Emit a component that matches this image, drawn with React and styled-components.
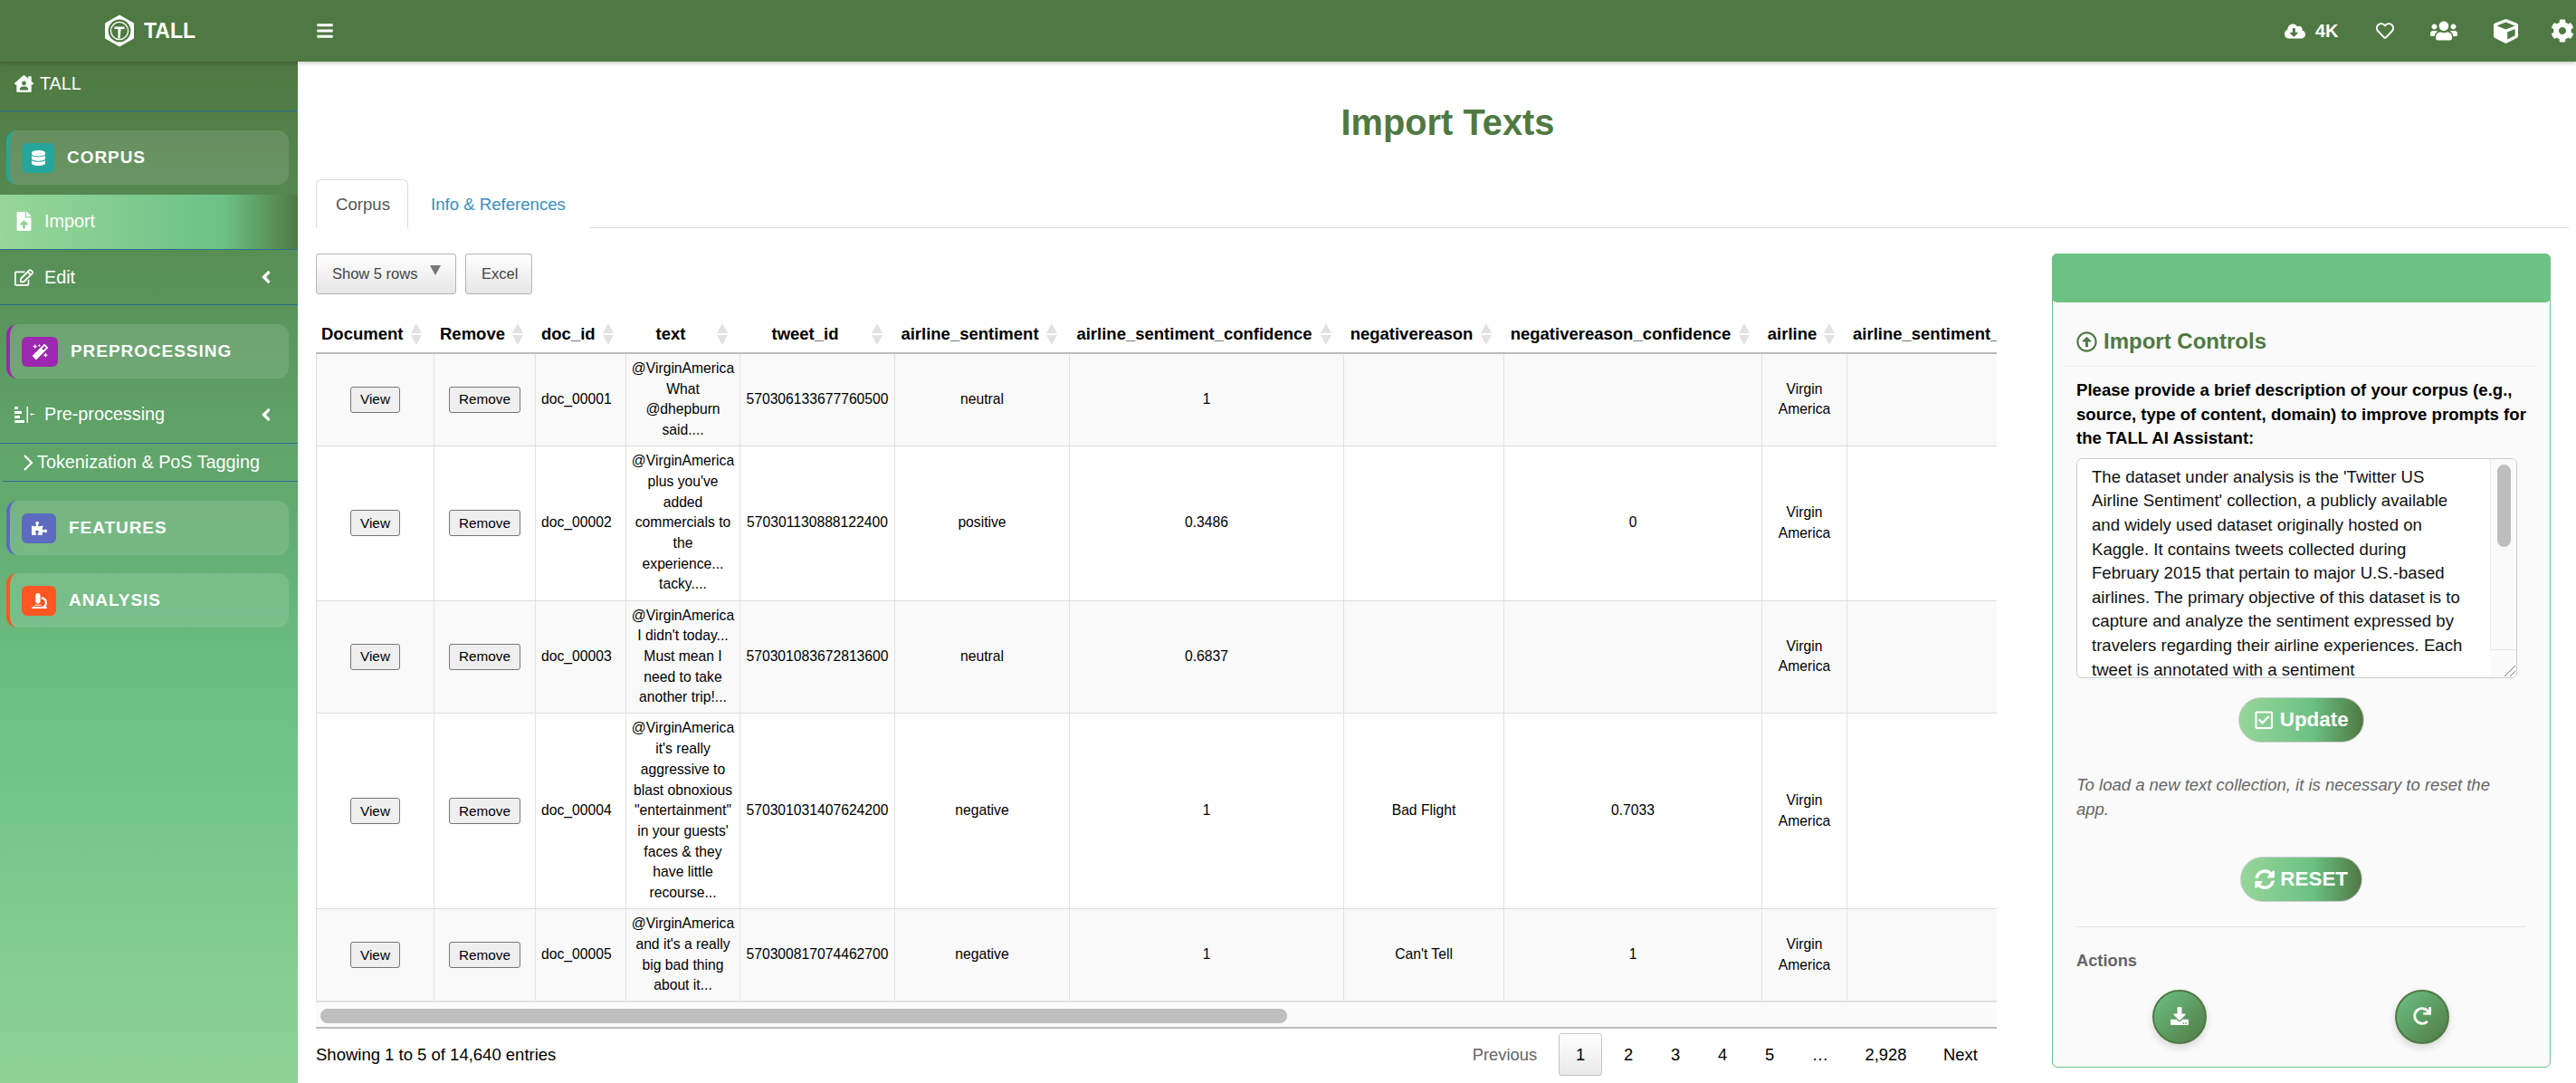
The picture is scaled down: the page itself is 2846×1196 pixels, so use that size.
import React from 'react';
import styled, { createGlobalStyle } from 'styled-components';
import {
  FaCloudDownloadAlt, FaRegHeart, FaUsers, FaCube, FaCog, FaHouseUser, FaDatabase,
  FaFileUpload, FaRegEdit, FaAngleLeft, FaMagic, FaPuzzlePiece, FaMicroscope,
  FaBars, FaRegArrowAltCircleUp, FaRegCheckSquare, FaSyncAlt, FaDownload, FaRedo,
} from 'react-icons/fa';

const GlobalStyle = createGlobalStyle`
  html, body { margin: 0; padding: 0; height: 100%; }
  body { font-family: "Liberation Sans", Arial, sans-serif; background: #fff; color: #000; overflow: hidden; }
  #root { height: 100%; }
  * { box-sizing: border-box; }
`;

const Page = styled.div`
  width: 2846px;
  height: 1196px;
  display: flex;
  flex-direction: column;
  overflow: hidden;
`;

const TopBar = styled.header`
  height: 68px;
  flex: none;
  display: flex;
  align-items: center;
  background: #4f7942;
  color: #fff;
  box-shadow: 0 2px 4px rgba(0, 0, 0, 0.2);
  position: relative;
  z-index: 2;
`;

const Brand = styled.div`
  width: 329px;
  flex: none;
  display: flex;
  align-items: center;
  gap: 10px;
  padding-left: 115px;
  font-size: 23px;
  font-weight: 700;
  & svg { flex: none; }
`;

const Burger = styled.div`
  margin-left: 20px;
  display: flex;
  font-size: 20px;
`;

const TopRight = styled.div`
  margin-left: auto;
  display: flex;
  align-items: center;
  width: 327px;
  flex: none;
  margin-right: -5px;
`;

const TopIcon = styled.span`
  display: flex;
  align-items: center;
  font-size: ${(p) => p.size}px;
  margin-left: ${(p) => p.gap}px;
`;

const Count = styled.b`
  font-size: 20px;
  margin: 0 1px 0 11px;
`;

const Body = styled.div`
  flex: 1;
  display: flex;
  min-height: 0;
`;

const Sidebar = styled.aside`
  width: 329px;
  flex: none;
  background: linear-gradient(180deg, #4f7942 0%, #6cc285 64%, #8fd296 100%);
  color: #fff;
`;

const SideRow = styled.div`
  height: ${(p) => p.h}px;
  margin-top: ${(p) => p.mt ?? 0}px;
  margin-left: ${(p) => p.inset ?? 0}px;
  display: flex;
  align-items: center;
  padding: ${(p) => p.pt ?? 0}px 24px ${(p) => p.pb ?? 0}px ${(p) => p.pad ?? 16}px;
  font-size: 19.8px;
  border-bottom: 1px solid #2e6c94;
  background: ${(p) => (p.active ? 'linear-gradient(90deg, #98d69a 0%, #6cc285 75%, #4f7942 100%)' : 'transparent')};
`;

const SideIcon = styled.span`
  width: ${(p) => p.w ?? 33}px;
  flex: none;
  display: flex;
  align-items: center;
  font-size: 21px;
`;

const Chevron = styled.span`
  margin-left: auto;
  display: flex;
  font-size: 22px;
`;

const Card = styled.div`
  height: 60px;
  margin: ${(p) => p.mt}px 10px 0 7px;
  display: flex;
  align-items: center;
  gap: 14px;
  padding-left: 13px;
  border-radius: 12px;
  border-left: 4px solid ${(p) => p.color};
  background: rgba(255, 255, 255, 0.12);
  font-size: 19px;
  font-weight: 700;
  letter-spacing: 0.95px;
`;

const CardIcon = styled.span`
  width: ${(p) => p.w}px;
  height: 33px;
  flex: none;
  border-radius: 6px;
  background: ${(p) => p.color};
  display: flex;
  align-items: center;
  justify-content: center;
  font-size: 17px;
`;

const Main = styled.main`
  flex: 1;
  min-width: 0;
  padding: 0 8px 0 20px;
`;

const Title = styled.h1`
  margin: 0;
  height: 130px;
  padding: 45px 0 0 12px;
  text-align: center;
  font-size: 39.8px;
  line-height: 44px;
  font-weight: 700;
  color: #4f7942;
`;

const Tabs = styled.nav`
  height: 54px;
  display: flex;
  border-bottom: 1px solid #ddd;
`;

const Tab = styled.div`
  width: ${(p) => p.w}px;
  height: 54px;
  padding-top: 16px;
  padding-left: ${(p) => (p.active ? 21 : 24)}px;
  font-size: 18.6px;
  line-height: 21px;
  color: ${(p) => (p.active ? '#555' : '#3c8dbc')};
  background: #fff;
  border: 1px solid ${(p) => (p.active ? '#ddd' : 'transparent')};
  border-bottom: 0;
  border-radius: 6px 6px 0 0;
`;

const Columns = styled.div`
  display: flex;
  align-items: flex-start;
`;

const TablePane = styled.section`
  width: 1857px;
  flex: none;
`;

const Toolbar = styled.div`
  display: flex;
  gap: 10px;
  margin-top: 28px;
`;

const ToolButton = styled.div`
  height: 45px;
  width: ${(p) => p.w}px;
  display: flex;
  align-items: center;
  padding-left: 17px;
  font-size: 16.5px;
  color: #444;
  background: linear-gradient(180deg, #fff 0%, #e6e6e6 100%);
  border: 1px solid #b5b5b5;
  border-radius: 3px;
`;

const Caret = styled.span`
  width: 0;
  height: 0;
  margin: -8px 0 0 14px;
  border-left: 6px solid transparent;
  border-right: 6px solid transparent;
  border-top: 11px solid #777;
`;

const TableClip = styled.div`
  overflow: hidden;
  margin-top: 17px;
`;

const DataTable = styled.table`
  table-layout: fixed;
  width: 2006px;
  border-collapse: separate;
  border-spacing: 0;
  font-size: 15.7px;
  line-height: 22.7px;
  text-align: center;
`;

const Th = styled.th`
  height: 49px;
  padding: 7px 28px 0 ${(p) => (p.align === 'left' ? 6 : 0)}px;
  font-size: 18.5px;
  line-height: 22px;
  font-weight: 700;
  white-space: nowrap;
  text-align: ${(p) => p.align};
  border-bottom: 2px solid #bbb;
  position: relative;
  overflow: hidden;
`;

const Sorter = styled.span`
  position: absolute;
  right: 13px;
  top: 15px;
  width: 13px;
  height: 24px;
  &::before, &::after {
    content: '';
    position: absolute;
    left: 0;
    border-left: 6.5px solid transparent;
    border-right: 6.5px solid transparent;
  }
  &::before { top: 0; border-bottom: 11.5px solid #e2e2e2; }
  &::after { bottom: 0; border-top: 11.5px solid #e2e2e2; }
`;

const Tr = styled.tr`
  background: ${(p) => (p.odd ? '#f9f9f9' : '#fff')};
`;

const Td = styled.td`
  padding: 5px 5px 5.4px ${(p) => (p.left ? 6 : 5)}px;
  text-align: ${(p) => (p.left ? 'left' : 'center')};
  border-bottom: 1px solid #ddd;
  border-right: 1px solid #e2e2e2;
  vertical-align: middle;
  &:first-child { border-left: 1px solid #ddd; }
`;

const RowButton = styled.button`
  font: inherit;
  font-size: 15.3px;
  line-height: 20px;
  height: 29px;
  padding: 0 10px;
  color: #000;
  background: #efefef;
  border: 1px solid #767676;
  border-radius: 3px;
`;

const ScrollTrack = styled.div`
  height: 30px;
  padding: 7px 5px 0;
  background: #fafafa;
  border-top: 1px solid #e8e8e8;
  border-bottom: 2px solid #bbb;
`;

const ScrollThumb = styled.div`
  height: 16px;
  width: 1068px;
  border-radius: 8px;
  background: #bebebe;
`;

const FootRow = styled.div`
  display: flex;
  align-items: center;
  justify-content: space-between;
  margin-top: 5px;
`;

const Info = styled.div`
  font-size: 18.5px;
`;

const Pager = styled.div`
  display: flex;
  align-items: center;
  font-size: 18.4px;
`;

const PageLink = styled.div`
  height: 47px;
  width: ${(p) => p.w}px;
  margin-right: ${(p) => (p.active ? 3 : 0)}px;
  display: flex;
  align-items: center;
  justify-content: center;
  color: ${(p) => (p.muted ? '#666' : '#000')};
  border: 1px solid ${(p) => (p.active ? '#c4c4c4' : 'transparent')};
  border-radius: 3px;
  background: ${(p) => (p.active ? 'linear-gradient(180deg, #fff 0%, #e9e9e9 100%)' : 'transparent')};
`;

const Panel = styled.section`
  width: 551px;
  height: 899px;
  margin: 28px 0 0 61px;
  flex: none;
  background: #fafafa;
  border: 1px solid #6cc285;
  border-radius: 6px;
  display: flex;
  flex-direction: column;
`;

const PanelHead = styled.div`
  height: 54px;
  flex: none;
  margin: -1px -1px 0;
  background: #6cc285;
  border-radius: 6px;
`;

const PanelBody = styled.div`
  padding: 0 26px;
  flex: 1;
`;

const PanelTitle = styled.h3`
  margin: 0 -13px;
  padding: 29px 13px 13px;
  height: 71px;
  font-size: 24px;
  line-height: 28px;
  font-weight: 700;
  color: #4f7942;
  display: flex;
  align-items: center;
  gap: 7px;
  border-bottom: 1px solid #eee;
  & svg { font-size: 23px; }
`;

const Label = styled.label`
  display: block;
  margin-top: 13px;
  font-size: 18.6px;
  line-height: 26.6px;
  font-weight: 700;
  color: #000;
`;

const DescriptionBox = styled.div`
  position: relative;
  width: 487px;
  height: 243px;
  margin-top: 8px;
  border: 1px solid #ccc;
  border-radius: 6px;
  overflow: hidden;
  background: #fff;
`;

const Description = styled.textarea`
  display: block;
  width: 100%;
  height: 100%;
  padding: 7px 53px 0 16px;
  font-family: inherit;
  font-size: 18.6px;
  line-height: 26.6px;
  color: #111;
  background: transparent;
  border: 0;
  outline: none;
  overflow: hidden;
  resize: none;
`;

const BoxTrack = styled.div`
  position: absolute;
  top: 0;
  right: 0;
  bottom: 30px;
  width: 29px;
  padding: 6px 6px 0 7px;
  background: #fafafa;
  border-left: 1px solid #e8e8e8;
  border-bottom: 1px solid #e4e4e4;
`;

const BoxThumb = styled.div`
  height: 91px;
  border-radius: 8px;
  background: #bebebe;
`;

const BoxCorner = styled.div`
  position: absolute;
  right: 0;
  bottom: 0;
  width: 29px;
  height: 30px;
  background: #fafafa;
  display: flex;
  align-items: flex-end;
  justify-content: flex-end;
`;

const PillRow = styled.div`
  display: flex;
  justify-content: center;
  margin-top: ${(p) => p.mt}px;
`;

const Pill = styled.button`
  height: 50px;
  width: ${(p) => p.w}px;
  display: flex;
  align-items: center;
  justify-content: center;
  gap: 6px;
  font: inherit;
  font-size: 22.4px;
  font-weight: 700;
  color: #fff;
  background: linear-gradient(90deg, #98d69a 0%, #6cc285 58%, #4f7942 100%);
  border: 1px solid #ccc;
  border-radius: 25px;
  padding: 0;
`;

const Note = styled.p`
  margin: 33px 0 0;
  font-size: 18.5px;
  line-height: 27.2px;
  font-style: italic;
  color: #666;
`;

const Rule = styled.hr`
  margin: 27px 0 0;
  border: 0;
  border-top: 1px solid #e3e3e3;
  width: 497px;
`;

const ActionsTitle = styled.div`
  margin-top: 26px;
  font-size: 18.3px;
  line-height: 22px;
  font-weight: 700;
  color: #666;
`;

const ActionRow = styled.div`
  display: flex;
  margin: 21px 0 0 84px;
  gap: 208px;
`;

const Round = styled.button`
  width: 60px;
  height: 60px;
  border-radius: 50%;
  padding: 0 0 3px;
  display: flex;
  align-items: center;
  justify-content: center;
  color: #fff;
  font-size: 20px;
  background: linear-gradient(135deg, #6cc285 0%, #4f7942 100%);
  border: 2px solid #4f7942;
  box-shadow: 0 4px 8px rgba(0, 0, 0, 0.14);
`;

const columns = [
  { name: 'Document', w: 131, align: 'left' },
  { name: 'Remove', w: 112, align: 'left' },
  { name: 'doc_id', w: 100, align: 'left' },
  { name: 'text', w: 126 },
  { name: 'tweet_id', w: 171 },
  { name: 'airline_sentiment', w: 193 },
  { name: 'airline_sentiment_confidence', w: 303 },
  { name: 'negativereason', w: 177 },
  { name: 'negativereason_confidence', w: 285 },
  { name: 'airline', w: 94 },
  { name: 'airline_sentiment_gold', w: 314, align: 'left' },
];

const rows = [
  {
    id: 'doc_00001',
    text: '@VirginAmerica What @dhepburn said....',
    tweet: '570306133677760500',
    sentiment: 'neutral',
    conf: '1',
    reason: '',
    reasonConf: '',
  },
  {
    id: 'doc_00002',
    text: "@VirginAmerica plus you've added commercials to the experience... tacky....",
    tweet: '570301130888122400',
    sentiment: 'positive',
    conf: '0.3486',
    reason: '',
    reasonConf: '0',
  },
  {
    id: 'doc_00003',
    text: "@VirginAmerica I didn't today... Must mean I need to take another trip!...",
    tweet: '570301083672813600',
    sentiment: 'neutral',
    conf: '0.6837',
    reason: '',
    reasonConf: '',
  },
  {
    id: 'doc_00004',
    text: '@VirginAmerica it\'s really aggressive to blast obnoxious "entertainment" in your guests\' faces & they have little recourse...',
    tweet: '570301031407624200',
    sentiment: 'negative',
    conf: '1',
    reason: 'Bad Flight',
    reasonConf: '0.7033',
  },
  {
    id: 'doc_00005',
    text: "@VirginAmerica and it's a really big bad thing about it...",
    tweet: '570300817074462700',
    sentiment: 'negative',
    conf: '1',
    reason: "Can't Tell",
    reasonConf: '1',
  },
];

const description =
  "The dataset under analysis is the 'Twitter US Airline Sentiment' collection, a publicly available and widely used dataset originally hosted on Kaggle. It contains tweets collected during February 2015 that pertain to major U.S.-based airlines. The primary objective of this dataset is to capture and analyze the sentiment expressed by travelers regarding their airline experiences. Each tweet is annotated with a sentiment";

function LogoMark() {
  return (
    <svg width="34" height="36" viewBox="0 0 34 36" fill="none">
      <path d="M17 1.5 32 10V26L17 34.5 2 26V10Z" fill="#fff" stroke="#fff" strokeWidth="2" strokeLinejoin="round" />
      <circle cx="17" cy="18" r="12.4" fill="#4f7942" />
      <circle cx="17" cy="18" r="9.6" stroke="#fff" strokeWidth="1.3" />
      <path d="M11.4 13.4H22.6V16H18.6L17.6 26.6H15.4V16H11.4Z" fill="#fff" />
    </svg>
  );
}

function StepsIcon() {
  return (
    <svg width="23" height="18" viewBox="0 0 23 18" fill="#fff">
      <rect x="0" y="0" width="4" height="3" />
      <rect x="0" y="5" width="8" height="3" />
      <rect x="0" y="10" width="6" height="3" />
      <rect x="0" y="15" width="11" height="3" />
      <rect x="13.5" y="0" width="1.5" height="18" />
      <path d="M17 8.6 19.4 7V8.2H22.5V9H19.4V10.2Z" />
    </svg>
  );
}

function ThinChevron() {
  return (
    <svg width="12" height="18" viewBox="0 0 12 18" fill="none" stroke="#fff" strokeWidth="2.2">
      <path d="M2 1 10 9 2 17" />
    </svg>
  );
}

function ResizeGrip() {
  return (
    <svg width="15" height="15" viewBox="0 0 15 15" fill="none" stroke="#777" strokeWidth="1">
      <path d="M2 14 14 2M8 14 14 8" />
    </svg>
  );
}

export default function App() {
  return (
    <Page>
      <GlobalStyle />
      <TopBar>
        <Brand>
          <LogoMark />
          TALL
        </Brand>
        <Burger><FaBars /></Burger>
        <TopRight>
          <TopIcon size={23} gap={0}><FaCloudDownloadAlt /></TopIcon>
          <Count>4K</Count>
          <TopIcon size={20} gap={40}><FaRegHeart /></TopIcon>
          <TopIcon size={30} gap={40}><FaUsers /></TopIcon>
          <TopIcon size={27} gap={40}><FaCube /></TopIcon>
          <TopIcon size={26} gap={36}><FaCog /></TopIcon>
        </TopRight>
      </TopBar>
      <Body>
        <Sidebar>
          <SideRow h={55} pb={5}>
            <SideIcon w={28}><FaHouseUser /></SideIcon>
            TALL
          </SideRow>
          <Card mt={21} color="#26a69a">
            <CardIcon w={36} color="#26a69a"><FaDatabase /></CardIcon>
            CORPUS
          </Card>
          <SideRow h={61} mt={11} pb={2} active>
            <SideIcon><FaFileUpload /></SideIcon>
            Import
          </SideRow>
          <SideRow h={61}>
            <SideIcon><FaRegEdit /></SideIcon>
            Edit
            <Chevron><FaAngleLeft /></Chevron>
          </SideRow>
          <Card mt={21} color="#9c27b0">
            <CardIcon w={40} color="#9c27b0"><FaMagic /></CardIcon>
            PREPROCESSING
          </Card>
          <SideRow h={72} pt={8}>
            <SideIcon><StepsIcon /></SideIcon>
            Pre-processing
            <Chevron><FaAngleLeft /></Chevron>
          </SideRow>
          <SideRow h={42} pad={22} inset={3}>
            <SideIcon w={16}><ThinChevron /></SideIcon>
            Tokenization &amp; PoS Tagging
          </SideRow>
          <Card mt={21} color="#5c6bc0">
            <CardIcon w={38} color="#5c6bc0"><FaPuzzlePiece /></CardIcon>
            FEATURES
          </Card>
          <Card mt={20} color="#ff5722">
            <CardIcon w={38} color="#ff5722"><FaMicroscope /></CardIcon>
            ANALYSIS
          </Card>
        </Sidebar>
        <Main>
          <Title>Import Texts</Title>
          <Tabs>
            <Tab active w={102}>Corpus</Tab>
            <Tab w={200}>Info &amp; References</Tab>
          </Tabs>
          <Columns>
            <TablePane>
              <Toolbar>
                <ToolButton w={155}>Show 5 rows<Caret /></ToolButton>
                <ToolButton w={74}>Excel</ToolButton>
              </Toolbar>
              <TableClip>
                <DataTable>
                  <colgroup>
                    {columns.map((c) => <col key={c.name} width={c.w} />)}
                  </colgroup>
                  <thead>
                    <tr>
                      {columns.map((c) => (
                        <Th key={c.name} align={c.align || 'center'}>
                          {c.name}
                          {c.name !== 'airline_sentiment_gold' && <Sorter />}
                        </Th>
                      ))}
                    </tr>
                  </thead>
                  <tbody>
                    {rows.map((r, i) => (
                      <Tr key={r.id} odd={i % 2 === 0}>
                        <Td><RowButton>View</RowButton></Td>
                        <Td><RowButton>Remove</RowButton></Td>
                        <Td left>{r.id}</Td>
                        <Td>{r.text}</Td>
                        <Td>{r.tweet}</Td>
                        <Td>{r.sentiment}</Td>
                        <Td>{r.conf}</Td>
                        <Td>{r.reason}</Td>
                        <Td>{r.reasonConf}</Td>
                        <Td>Virgin America</Td>
                        <Td />
                      </Tr>
                    ))}
                  </tbody>
                </DataTable>
              </TableClip>
              <ScrollTrack><ScrollThumb /></ScrollTrack>
              <FootRow>
                <Info>Showing 1 to 5 of 14,640 entries</Info>
                <Pager>
                  <PageLink muted w={119}>Previous</PageLink>
                  <PageLink active w={48}>1</PageLink>
                  <PageLink w={52}>2</PageLink>
                  <PageLink w={52}>3</PageLink>
                  <PageLink w={52}>4</PageLink>
                  <PageLink w={52}>5</PageLink>
                  <PageLink w={60}>…</PageLink>
                  <PageLink w={85}>2,928</PageLink>
                  <PageLink w={80}>Next</PageLink>
                </Pager>
              </FootRow>
            </TablePane>
            <Panel>
              <PanelHead />
              <PanelBody>
                <PanelTitle><FaRegArrowAltCircleUp />Import Controls</PanelTitle>
                <Label>Please provide a brief description of your corpus (e.g., source, type of content, domain) to improve prompts for the TALL AI Assistant:</Label>
                <DescriptionBox>
                  <Description readOnly defaultValue={description} />
                  <BoxTrack><BoxThumb /></BoxTrack>
                  <BoxCorner><ResizeGrip /></BoxCorner>
                </DescriptionBox>
                <PillRow mt={21}>
                  <Pill w={139}><FaRegCheckSquare />Update</Pill>
                </PillRow>
                <Note>To load a new text collection, it is necessary to reset the app.</Note>
                <PillRow mt={39}>
                  <Pill w={135}><FaSyncAlt />RESET</Pill>
                </PillRow>
                <Rule />
                <ActionsTitle>Actions</ActionsTitle>
                <ActionRow>
                  <Round><FaDownload /></Round>
                  <Round><FaRedo /></Round>
                </ActionRow>
              </PanelBody>
            </Panel>
          </Columns>
        </Main>
      </Body>
    </Page>
  );
}
